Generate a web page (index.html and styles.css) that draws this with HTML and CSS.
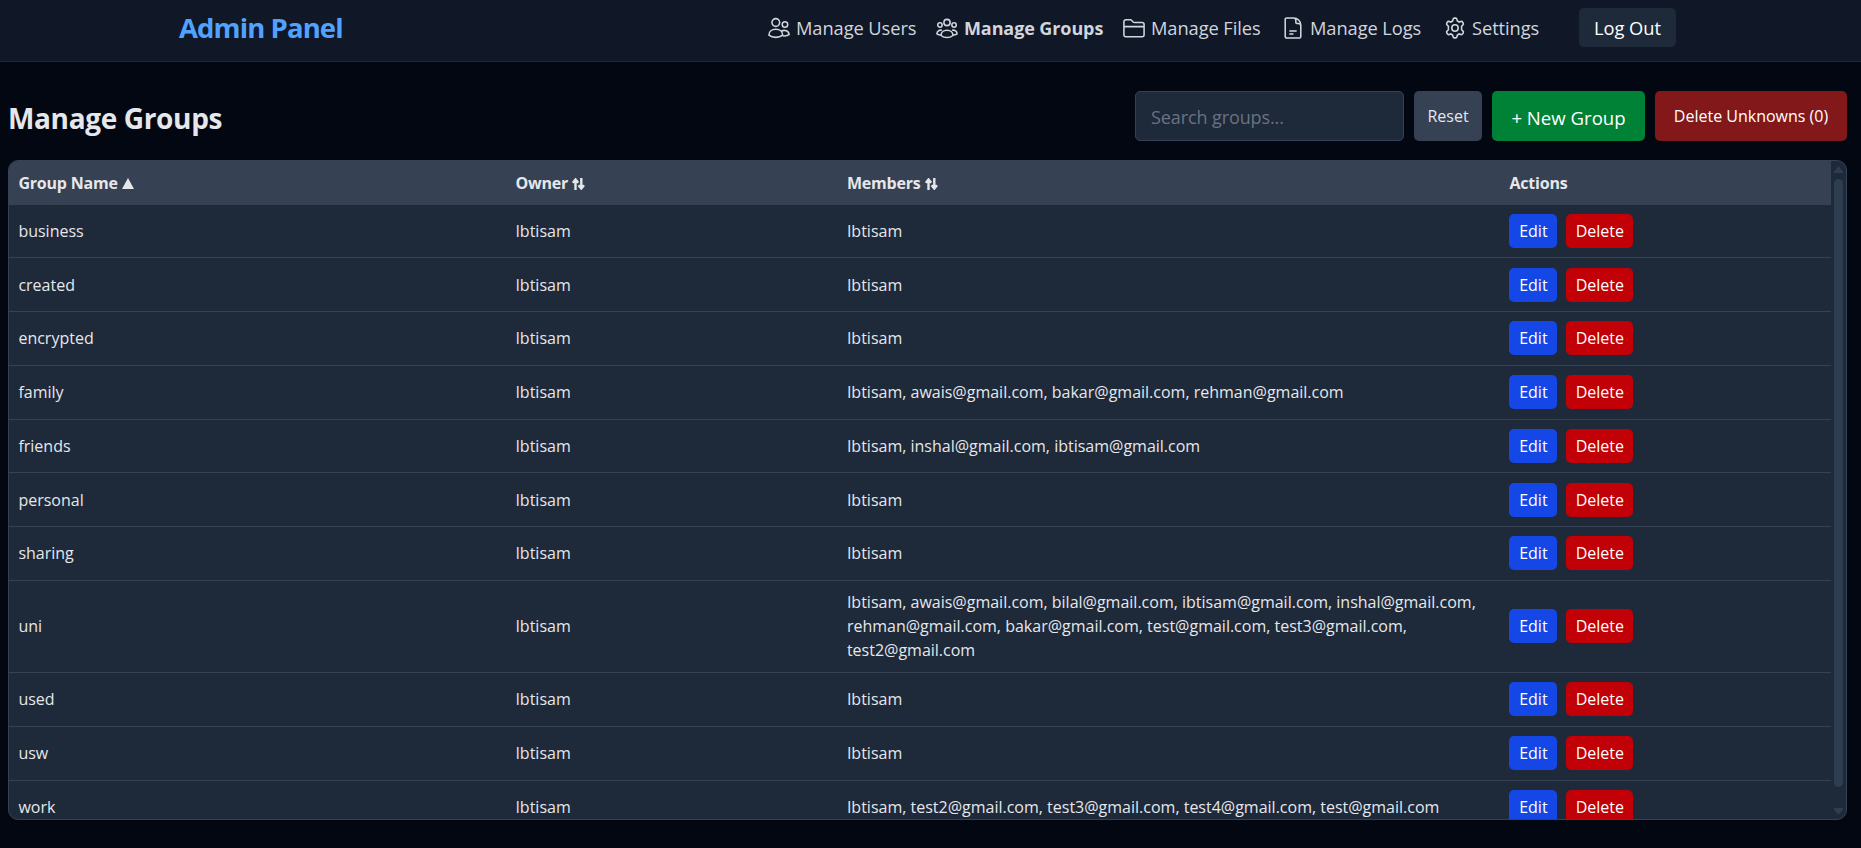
FILE: index.html
```html
<!DOCTYPE html>
<html lang="en">
<head>
<meta charset="utf-8">
<title>Admin Panel</title>
<link rel="stylesheet" href="styles.css">
</head>
<body>
<header class="topbar">
  <div class="topbar-inner">
    <div class="logo"><span>Admin Panel</span></div>
    <nav class="nav">
      <a class="nav-item n-users"><svg class="icon" viewBox="0 0 24 24"><circle cx="8.500" cy="6" r="4.200"/><circle cx="18.500" cy="8.200" r="3"/><path d="M1 19.700c0-4 3.200-6.400 7.500-6.400s7.500 2.400 7.500 6.400c-2 1.700-4.600 2.500-7.500 2.500S3 21.400 1 19.700zM14.500 15.500c3.600-2 8.300-.3 8.500 3.700-1.600 1.200-4 1.700-7 1.300"/></svg><span>Manage Users</span></a>
      <a class="nav-item active n-groups"><svg class="icon" viewBox="0 0 24 24"><circle cx="12" cy="6" r="3.400"/><circle cx="4.300" cy="8.700" r="2.400"/><circle cx="19.700" cy="8.700" r="2.400"/><path d="M5.500 20.200c0-3.600 2.900-5.700 6.500-5.700s6.500 2.100 6.500 5.700c-1.800 1.500-4 2.200-6.500 2.200s-4.700-.7-6.500-2.200zM6.500 14.500c-2.900-.8-5.500.9-5.500 4 1 .8 2.600 1.200 4.600 1.200M17.500 14.500c2.900-.8 5.500.9 5.500 4-1 .8-2.600 1.200-4.600 1.200"/></svg><span>Manage Groups</span></a>
      <a class="nav-item n-files"><svg class="icon" viewBox="0 0 24 24"><path d="M1 5.200A2.200 2.200 0 0 1 3.200 3h4.600c.6 0 1.100.2 1.500.6l1.700 1.800c.4.400.9.600 1.500.6h8.300A2.200 2.200 0 0 1 23 8.200v11.100a2.200 2.200 0 0 1-2.200 2.200H3.200A2.200 2.200 0 0 1 1 19.300zM1 10.500h22"/></svg><span>Manage Files</span></a>
      <a class="nav-item n-logs"><svg class="icon" viewBox="0 0 24 24"><path d="M3.500 2.600c0-.9.700-1.600 1.600-1.600h7.400c4.400 0 8 3.600 8 8v12.400c0 .9-.7 1.600-1.600 1.600H5.100c-.9 0-1.600-.7-1.600-1.600zM12.500 1c1.700 0 2.600.9 2.600 2.600V6c0 .7.400 1 1 1h1.900c1.600 0 2.500.8 2.500 2.500M8 15.200h8M8 18.500h4.500"/></svg><span>Manage Logs</span></a>
      <a class="nav-item n-settings"><svg class="icon" viewBox="0 0 24 24"><circle cx="12" cy="12" r="3.500"/><path d="M9.800 2.700c.2-1 .8-1.500 1.600-1.500h1.200c.8 0 1.400.5 1.600 1.500l.4 1.700 1.900 1.100 1.800-.6c.9-.3 1.600 0 2 .7l.7 1.200c.4.700.2 1.400-.5 2L19.200 10.200v3.600l1.300 1.400c.7.600.9 1.300.5 2l-.7 1.200c-.4.700-1.100 1-2 .7l-1.800-.6-1.900 1.100-.4 1.700c-.2 1-.8 1.500-1.600 1.500h-1.200c-.8 0-1.400-.5-1.600-1.500l-.4-1.700-1.900-1.100-1.800.6c-.9.3-1.600 0-2-.7L3 17.200c-.4-.7-.2-1.400.5-2l1.300-1.400v-3.600L3.500 8.800c-.7-.6-.9-1.300-.5-2l.7-1.200c.4-.7 1.100-1 2-.7l1.800.6 1.900-1.100z"/></svg><span>Settings</span></a>
      <button class="logout">Log Out</button>
    </nav>
  </div>
</header>
<main class="page">
  <div class="toolbar">
    <h1 class="title">Manage Groups</h1>
    <div class="controls">
      <input class="search" type="text" placeholder="Search groups...">
      <button class="btn reset">Reset</button>
      <button class="btn new-group">+ New Group</button>
      <button class="btn purge">Delete Unknowns (0)</button>
    </div>
  </div>
  <section class="panel">
    <div class="table">
      <div class="row head">
        <span>Group Name <svg class="asc" viewBox="0 0 12 11"><path d="M6 0l6 11H0z"/></svg></span>
        <span>Owner <svg class="sort" viewBox="0 0 13 12"><path d="M3.500 12V2M.8 4.800L3.500 1.500l2.700 3.300M9.300 0v10M6.600 7.200l2.700 3.300L12 7.200"/></svg></span>
        <span>Members <svg class="sort" viewBox="0 0 13 12"><path d="M3.500 12V2M.8 4.800L3.500 1.500l2.700 3.300M9.300 0v10M6.600 7.200l2.700 3.300L12 7.200"/></svg></span>
        <span>Actions</span>
      </div>
      <div class="row"><span>business</span><span>Ibtisam</span><span>Ibtisam</span><div class="actions"><button class="edit">Edit</button><button class="delete">Delete</button></div></div>
      <div class="row"><span>created</span><span>Ibtisam</span><span>Ibtisam</span><div class="actions"><button class="edit">Edit</button><button class="delete">Delete</button></div></div>
      <div class="row"><span>encrypted</span><span>Ibtisam</span><span>Ibtisam</span><div class="actions"><button class="edit">Edit</button><button class="delete">Delete</button></div></div>
      <div class="row"><span>family</span><span>Ibtisam</span><span>Ibtisam, awais@gmail.com, bakar@gmail.com, rehman@gmail.com</span><div class="actions"><button class="edit">Edit</button><button class="delete">Delete</button></div></div>
      <div class="row"><span>friends</span><span>Ibtisam</span><span>Ibtisam, inshal@gmail.com, ibtisam@gmail.com</span><div class="actions"><button class="edit">Edit</button><button class="delete">Delete</button></div></div>
      <div class="row"><span>personal</span><span>Ibtisam</span><span>Ibtisam</span><div class="actions"><button class="edit">Edit</button><button class="delete">Delete</button></div></div>
      <div class="row"><span>sharing</span><span>Ibtisam</span><span>Ibtisam</span><div class="actions"><button class="edit">Edit</button><button class="delete">Delete</button></div></div>
      <div class="row tall"><span>uni</span><span>Ibtisam</span><span>Ibtisam, awais@gmail.com, bilal@gmail.com, ibtisam@gmail.com, inshal@gmail.com,<br>rehman@gmail.com, bakar@gmail.com, test@gmail.com, test3@gmail.com,<br>test2@gmail.com</span><div class="actions"><button class="edit">Edit</button><button class="delete">Delete</button></div></div>
      <div class="row"><span>used</span><span>Ibtisam</span><span>Ibtisam</span><div class="actions"><button class="edit">Edit</button><button class="delete">Delete</button></div></div>
      <div class="row"><span>usw</span><span>Ibtisam</span><span>Ibtisam</span><div class="actions"><button class="edit">Edit</button><button class="delete">Delete</button></div></div>
      <div class="row"><span>work</span><span>Ibtisam</span><span>Ibtisam, test2@gmail.com, test3@gmail.com, test4@gmail.com, test@gmail.com</span><div class="actions"><button class="edit">Edit</button><button class="delete">Delete</button></div></div>
    </div>
    <div class="scrollbar">
      <svg class="arrow" viewBox="0 0 9 7"><path d="M4.500 0L9 5.500V7H0V5.500z"/></svg>
      <div class="thumb"></div>
      <svg class="arrow" viewBox="0 0 9 7"><path d="M4.500 7L9 1.500V0H0v1.500z"/></svg>
    </div>
  </section>
</main>
</body>
</html>
```
FILE: styles.css
```css
* { box-sizing: border-box; }
body {
  margin: 0;
  height: 848px;
  overflow: hidden;
  background: #030712;
  color: #e5e7eb;
  font-family: "Open Sans", "Noto Sans", sans-serif;
  font-size: 16px;
}
button { border: 0; padding: 0; font-family: inherit; color: #fff; white-space: nowrap; }
.topbar { height: 62px; background: #101828; border-bottom: 1px solid #1e2939; }
.topbar-inner { display: flex; justify-content: space-between; width: 1497px; margin-left: 179px; padding-top: 8px; height: 61px; }
.logo { color: #51a2ff; font-weight: 700; font-size: 27.500px; line-height: 40px; letter-spacing: -0.9px; white-space: nowrap; }
.nav { display: flex; height: 39px; align-items: center; }
.nav-item { display: flex; align-items: center; gap: 6px; color: #d1d5dc; font-size: 18.300px; white-space: nowrap; flex: none; letter-spacing: -0.08px; }
.nav-item.active { font-weight: 700; font-size: 18px; letter-spacing: -0.1px; }
.icon { width: 22px; height: 22px; fill: none; stroke: #d1d5dc; stroke-width: 1.7; flex: none; }
.n-users { width: 168px; }
.n-groups { width: 187px; }
.n-files { width: 159px; }
.n-logs { width: 162px; }
.n-settings { width: 135px; }
.logout { width: 97px; height: 39px; border-radius: 5px; background: #1e2939; font-size: 18.300px; }
.page { padding: 29px 14px 0 8px; }
.toolbar { display: flex; justify-content: space-between; align-items: center; height: 50px; margin-bottom: 19px; }
.title { margin: 4px 0 0; font-size: 28px; line-height: 38px; letter-spacing: -0.35px; white-space: nowrap; }
.controls { display: flex; gap: 10px; height: 50px; }
.search { width: 269px; border: 1px solid #364153; border-radius: 5px; background: #1e2939; padding: 2px 15px 0; font-family: inherit; font-size: 18px; letter-spacing: -0.1px; color: #e5e7eb; }
.search::placeholder { color: #6a7282; }
.btn { border-radius: 5px; font-size: 16px; }
.reset { width: 68px; background: #364153; color: #e5e7eb; }
.new-group { width: 153px; background: #008236; font-size: 18.600px; padding-top: 2px; }
.purge { width: 192px; background: #82181a; }
.panel { display: flex; height: 660px; border: 1px solid #364153; border-radius: 10px; background: #1e2939; overflow: hidden; }
.table { width: 1822px; height: 658px; overflow: hidden; flex: none; }
.row { display: grid; grid-template-columns: 497px 331.500px 662.500px 1fr; align-items: center; height: 53.750px; padding-left: 9.400px; border-bottom: 1px solid #364153; line-height: 24px; white-space: nowrap; }
.row.head { height: 43.500px; background: #364153; font-weight: 700; border: 0; letter-spacing: -0.2px; }
.row.tall { height: 92.250px; }
.asc { width: 12px; height: 11px; fill: #e5e7eb; }
.sort { width: 13px; height: 12px; fill: none; stroke: #e5e7eb; stroke-width: 2.400; vertical-align: -1px; }
.actions { display: flex; gap: 9px; }
.edit, .delete { height: 34px; border-radius: 5px; font-size: 16px; }
.edit { width: 48px; background: #1447e6; }
.delete { width: 67px; background: #c10007; }
.scrollbar { width: 15px; padding: 5px 3px 4px; display: flex; flex-direction: column; align-items: center; }
.arrow { width: 9px; height: 7px; fill: #2f3d50; flex: none; }
.thumb { width: 9px; height: 608px; margin: 6px 0 21px; border-radius: 5px; background: #2f3d50; flex: none; }
```
